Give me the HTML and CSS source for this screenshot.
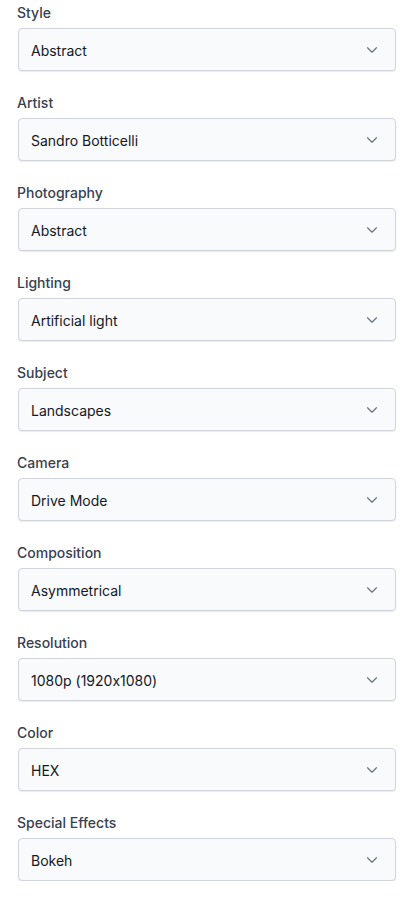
FILE: index.html
```html
<!DOCTYPE html>
<html lang="en">
<head>
<meta charset="utf-8">
<title>Settings</title>
<link rel="stylesheet" href="styles.css">
</head>
<body>
<form class="form">
  <div class="field"><label class="label">Style</label><div class="select"><span class="value">Abstract</span><svg class="chev" viewBox="0 0 20 20"><path d="M5 7.5l5 5 5-5"/></svg></div></div>
  <div class="field"><label class="label">Artist</label><div class="select"><span class="value">Sandro Botticelli</span><svg class="chev" viewBox="0 0 20 20"><path d="M5 7.5l5 5 5-5"/></svg></div></div>
  <div class="field"><label class="label">Photography</label><div class="select"><span class="value">Abstract</span><svg class="chev" viewBox="0 0 20 20"><path d="M5 7.5l5 5 5-5"/></svg></div></div>
  <div class="field"><label class="label">Lighting</label><div class="select"><span class="value">Artificial light</span><svg class="chev" viewBox="0 0 20 20"><path d="M5 7.5l5 5 5-5"/></svg></div></div>
  <div class="field"><label class="label">Subject</label><div class="select"><span class="value">Landscapes</span><svg class="chev" viewBox="0 0 20 20"><path d="M5 7.5l5 5 5-5"/></svg></div></div>
  <div class="field"><label class="label">Camera</label><div class="select"><span class="value">Drive Mode</span><svg class="chev" viewBox="0 0 20 20"><path d="M5 7.5l5 5 5-5"/></svg></div></div>
  <div class="field"><label class="label">Composition</label><div class="select"><span class="value">Asymmetrical</span><svg class="chev" viewBox="0 0 20 20"><path d="M5 7.5l5 5 5-5"/></svg></div></div>
  <div class="field"><label class="label">Resolution</label><div class="select"><span class="value">1080p (1920x1080)</span><svg class="chev" viewBox="0 0 20 20"><path d="M5 7.5l5 5 5-5"/></svg></div></div>
  <div class="field"><label class="label">Color</label><div class="select"><span class="value">HEX</span><svg class="chev" viewBox="0 0 20 20"><path d="M5 7.5l5 5 5-5"/></svg></div></div>
  <div class="field"><label class="label">Special Effects</label><div class="select"><span class="value">Bokeh</span><svg class="chev" viewBox="0 0 20 20"><path d="M5 7.5l5 5 5-5"/></svg></div></div>
</form>
</body>
</html>
```
FILE: styles.css
```css
html, body {
  margin: 0;
  padding: 0;
  background: #ffffff;
}
body {
  font-family: Inter, "Noto Sans", sans-serif;
  font-feature-settings: "calt" 0;
  -webkit-font-smoothing: antialiased;
}
.form {
  display: flex;
  flex-direction: column;
  gap: 22px;
  padding: 3px 13px 0 18px;
}
.field {
  display: flex;
  flex-direction: column;
  gap: 5px;
}
.label {
  font-size: 14px;
  line-height: 20px;
  font-weight: 500;
  color: #374151;
  margin-left: -1px;
}
.select {
  height: 43px;
  box-sizing: border-box;
  border: 1px solid #d1d5db;
  border-radius: 4px;
  background: #f9fafb;
  box-shadow: 0 1px 1px rgba(0,0,0,0.08);
  display: flex;
  align-items: center;
  justify-content: space-between;
  padding: 1px 14px 0 12px;
}
.value {
  font-size: 14px;
  color: #111827;
}
.chev {
  width: 18px;
  height: 18px;
  margin-top: -1px;
  fill: none;
  stroke: #6b7280;
  stroke-width: 1.3;
  stroke-linecap: round;
  stroke-linejoin: round;
}
```
